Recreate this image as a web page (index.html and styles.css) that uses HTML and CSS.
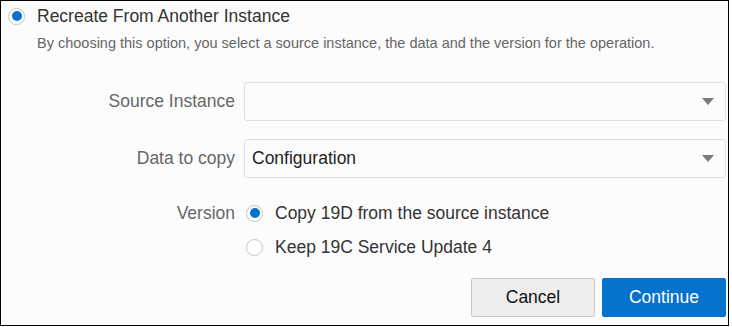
FILE: index.html
```html
<!DOCTYPE html>
<html>
<head>
<meta charset="utf-8">
<link rel="stylesheet" href="styles.css">
</head>
<body>
<div class="frame">
  <div class="header">
    <span class="radio checked"></span>
    <span class="title">Recreate From Another Instance</span>
  </div>
  <p class="desc">By choosing this option, you select a source instance, the data and the version for the operation.</p>
  <div class="form">
    <label class="label">Source Instance</label>
    <div class="select"><span class="value"></span><span class="arrow"></span></div>
    <label class="label">Data to copy</label>
    <div class="select"><span class="value">Configuration</span><span class="arrow"></span></div>
    <label class="label version-label">Version</label>
    <div class="options">
      <div class="option"><span class="radio checked"></span><span class="opt-text">Copy 19D from the source instance</span></div>
      <div class="option"><span class="radio"></span><span class="opt-text">Keep 19C Service Update 4</span></div>
    </div>
  </div>
  <div class="actions">
    <button class="btn cancel">Cancel</button>
    <button class="btn primary">Continue</button>
  </div>
</div>
</body>
</html>
```
FILE: styles.css
```css
html, body {
  margin: 0;
  padding: 0;
  background: #ffffff;
}
body {
  font-family: "Liberation Sans", Arial, sans-serif;
}
.frame {
  box-sizing: border-box;
  width: 729px;
  height: 326px;
  border: 1px solid #000;
  background: #fcfcfc;
  padding: 6px 2px 0 7px;
}
.header {
  display: flex;
  align-items: center;
  height: 18px;
}
.radio {
  box-sizing: border-box;
  width: 17px;
  height: 17px;
  border: 1px solid #c4c4c4;
  border-radius: 50%;
  background: #fff;
  display: flex;
  align-items: center;
  justify-content: center;
  flex: none;
}
.radio.checked::after {
  content: "";
  width: 10px;
  height: 10px;
  border-radius: 50%;
  background: #0572ce;
}
.title {
  margin-left: 12px;
  font-size: 17.5px;
  color: #333;
}
.desc {
  margin: 9px 0 0 29px;
  font-size: 14.5px;
  line-height: 18px;
  color: #666;
}
.form {
  margin-top: 30px;
  margin-left: -7px;
  display: grid;
  grid-template-columns: 234px 1fr;
  column-gap: 9px;
  row-gap: 18px;
}
.label {
  display: flex;
  align-items: center;
  justify-content: flex-end;
  font-size: 17.5px;
  color: #666;
}
.version-label {
  align-items: flex-start;
  line-height: 34px;
}
.select {
  box-sizing: border-box;
  height: 39px;
  border: 1px solid #e0e0e0;
  border-radius: 3px;
  background: #fcfcfc;
  display: flex;
  align-items: center;
  justify-content: space-between;
  padding: 0 11px 0 7px;
}
.value {
  font-size: 17.5px;
  color: #222;
}
.arrow {
  width: 0;
  height: 0;
  border-left: 6px solid transparent;
  border-right: 6px solid transparent;
  border-top: 7px solid #7a7a7a;
}
.options {
  display: flex;
  flex-direction: column;
  padding-left: 2px;
}
.option {
  display: flex;
  align-items: center;
  height: 34px;
}
.opt-text {
  margin-left: 12px;
  font-size: 17.5px;
  color: #333;
}
.actions {
  margin-top: 14px;
  display: flex;
  justify-content: flex-end;
  gap: 7px;
}
.btn {
  box-sizing: border-box;
  width: 124px;
  height: 39px;
  border-radius: 2px;
  font-family: "Liberation Sans", Arial, sans-serif;
  font-size: 17.5px;
  cursor: pointer;
}
.cancel {
  background: #ededed;
  border: 1px solid #c8c8c8;
  color: #111;
}
.primary {
  background: #0572ce;
  border: 1px solid #0572ce;
  color: #fff;
}
```
